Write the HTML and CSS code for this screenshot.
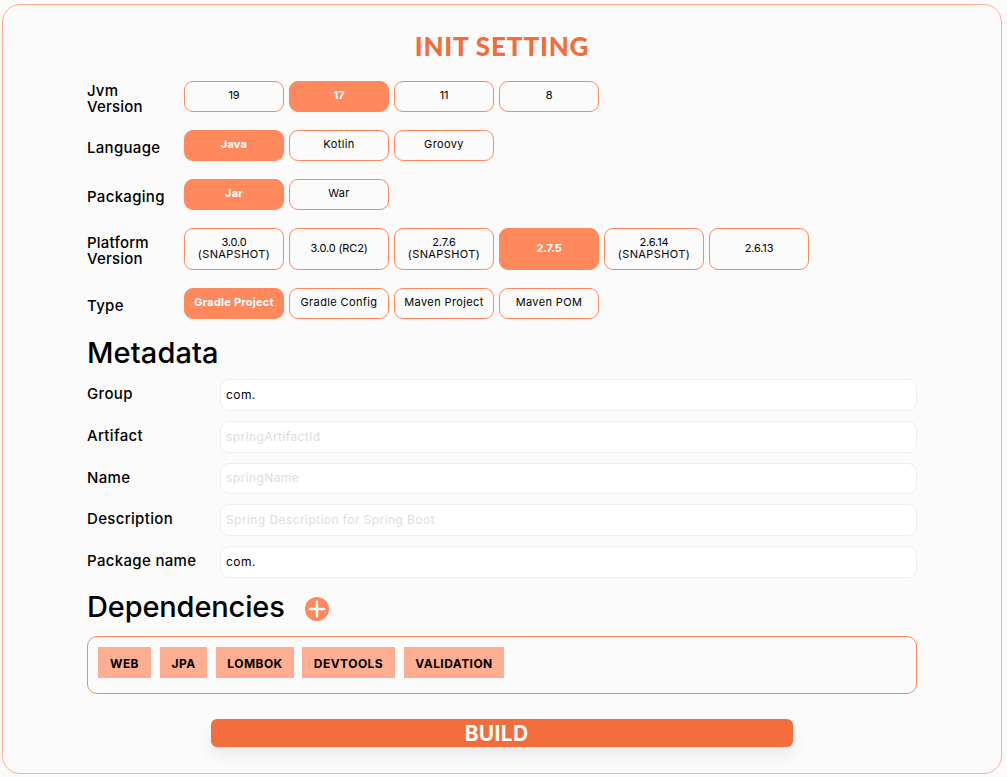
FILE: index.html
```html
<!DOCTYPE html>
<html lang="en">
<head>
<meta charset="utf-8">
<title>Init Setting</title>
<link rel="stylesheet" href="styles.css">
</head>
<body>
<main class="card">
  <h1 class="title">INIT SETTING</h1>
  <section class="options">
    <div class="option-row">
      <div class="label label-double">Jvm<br>Version</div>
      <button class="choice number">19</button><button class="choice number selected">17</button><button class="choice number">11</button><button class="choice number">8</button>
    </div>
    <div class="option-row">
      <div class="label">Language</div>
      <button class="choice selected">Java</button><button class="choice">Kotlin</button><button class="choice">Groovy</button>
    </div>
    <div class="option-row">
      <div class="label">Packaging</div>
      <button class="choice selected">Jar</button><button class="choice">War</button>
    </div>
    <div class="option-row tall">
      <div class="label label-double">Platform<br>Version</div>
      <button class="choice number"><span>3.0.0<br><span class="snap">(SNAPSHOT)</span></span></button><button class="choice number">3.0.0 (RC2)</button><button class="choice number"><span>2.7.6<br><span class="snap">(SNAPSHOT)</span></span></button><button class="choice number selected">2.7.5</button><button class="choice number"><span>2.6.14<br><span class="snap">(SNAPSHOT)</span></span></button><button class="choice number">2.6.13</button>
    </div>
    <div class="option-row">
      <div class="label">Type</div>
      <button class="choice selected">Gradle Project</button><button class="choice">Gradle Config</button><button class="choice">Maven Project</button><button class="choice">Maven POM</button>
    </div>
  </section>
  <h2 class="heading metadata">Metadata</h2>
  <section class="fields">
    <label class="field"><span class="name">Group</span><input class="input" value="com."></label>
    <label class="field"><span class="name">Artifact</span><input class="input" placeholder="springArtifactId"></label>
    <label class="field"><span class="name">Name</span><input class="input" placeholder="springName"></label>
    <label class="field"><span class="name">Description</span><input class="input" placeholder="Spring Description for Spring Boot"></label>
    <label class="field"><span class="name">Package name</span><input class="input" value="com."></label>
  </section>
  <div class="dep-head">
    <h2 class="heading dependencies">Dependencies</h2>
    <svg class="plus" width="24" height="24" viewBox="0 0 24 24"><circle cx="12" cy="12" r="12" fill="#ff885c"/><path d="M12 4.8v14.4M4.8 12h14.4" stroke="#fff" stroke-width="2.4" stroke-linecap="round"/></svg>
  </div>
  <div class="dep-box">
    <span class="tag web">WEB</span><span class="tag jpa">JPA</span><span class="tag lombok">LOMBOK</span><span class="tag devtools">DEVTOOLS</span><span class="tag validation">VALIDATION</span>
  </div>
  <button class="build">BUILD</button>
</main>
</body>
</html>
```
FILE: styles.css
```css
* { box-sizing: border-box; }
body {
  margin: 0;
  padding: 4px 5px 3px 2px;
  background: #fbfbfb;
  color: #000;
  font-family: Inter, "Open Sans", sans-serif;
}
button, input { font-family: inherit; margin: 0; }
.card {
  width: 1000px;
  height: 770px;
  border: 1px solid #ffae92;
  border-radius: 18px;
  padding: 26px 84px 0;
  background: #fbfbfb;
}
.title {
  margin: 0;
  height: 50px;
  line-height: 30px;
  text-align: center;
  font-family: Lato, sans-serif;
  font-size: 26px;
  font-weight: 900;
  letter-spacing: .85px;
  color: #f36c3c;
}
.options { display: flex; flex-direction: column; gap: 18px; }
.option-row { display: flex; gap: 5px; height: 31px; }
.option-row.tall { height: 42px; }
.label {
  width: 92px;
  padding-top: 10px;
  font-size: 15px;
  font-weight: 500;
  line-height: 16px;
  letter-spacing: .3px;
}
.label-double { padding-top: 2px; letter-spacing: .2px; }
.tall .label-double { padding-top: 7px; }
.choice {
  display: flex;
  align-items: center;
  justify-content: center;
  width: 100px;
  padding: 0 0 3px;
  border: 1px solid #ff885c;
  border-radius: 9px;
  background: #fbfbfb;
  color: #000;
  font-size: 11px;
  line-height: 12px;
  letter-spacing: .38px;
  text-align: center;
  white-space: nowrap;
}
.choice.selected {
  background: #ff885c;
  color: #fff;
  font-weight: 700;
  letter-spacing: .25px;
}
.choice.number { letter-spacing: -.15px; }
.snap { letter-spacing: .4px; }
.heading { margin: 0; font-weight: 500; font-size: 29px; line-height: 36px; }
.metadata { height: 60px; padding-top: 16px; letter-spacing: .1px; }
.dependencies { width: 197px; letter-spacing: -.15px; }
.fields { display: grid; grid-template-rows: repeat(5, 31.75px); row-gap: 10px; }
.field { display: grid; grid-template-columns: 133px 697px; }
.name { font-size: 15px; font-weight: 500; line-height: 18px; padding-top: 6px; letter-spacing: .33px; }
.input {
  width: 697px;
  height: 100%;
  border: 1px solid #eee;
  border-radius: 9px;
  background: #fff;
  padding: 0 5px 1px;
  font-size: 12px;
  letter-spacing: .42px;
  color: #000;
}
.input::placeholder { color: #ddd; opacity: 1; }
.dep-head { display: flex; gap: 21px; height: 58px; padding-top: 11px; }
.plus { margin-top: 8px; }
.dep-box {
  display: flex;
  height: 58px;
  padding: 10px;
  border: 1px solid #ff885c;
  border-radius: 10px;
}
.tag {
  height: 31px;
  margin-right: 9px;
  background: #ffae92;
  font-size: 12px;
  font-weight: 700;
  line-height: 33px;
  letter-spacing: .45px;
  text-align: center;
}
.web { width: 53px; }
.jpa { width: 47px; }
.lombok { width: 78px; margin-right: 8px; }
.devtools { width: 93px; }
.validation { width: 100px; }
.build {
  display: block;
  width: 582px;
  height: 28px;
  margin: 25px auto 0;
  padding: 0 11px 0 0;
  border: 0;
  border-radius: 6px;
  background: #f36c3c;
  color: #fff;
  font-size: 21px;
  font-weight: 700;
  line-height: 30px;
  letter-spacing: .3px;
  box-shadow: 0 8px 15px rgba(0, 0, 0, .07);
}
```
